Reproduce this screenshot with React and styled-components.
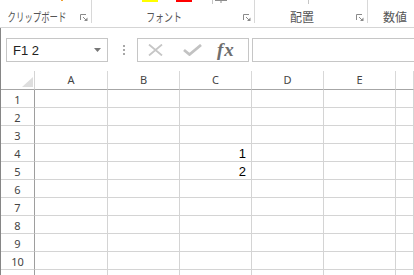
import React from "react";
import styled, { createGlobalStyle } from "styled-components";

const GlobalStyle = createGlobalStyle`
  html, body {
    margin: 0;
    padding: 0;
    background: #fff;
  }
  body {
    font-family: "Noto Sans", "Liberation Sans", sans-serif;
  }
`;

const COLS = ["A", "B", "C", "D", "E", ""];
const ROWS = [1, 2, 3, 4, 5, 6, 7, 8, 9, 10, 11];
const VALUES = { "4-C": "1", "5-C": "2" };

const App = () => {
  return (
    <Window>
      <GlobalStyle />
      <Ribbon>
        <Group $width={92}>
          <TopStrip>
            <Swatch $color="#f0a030" $w={2} $h={1} $ml={61} />
          </TopStrip>
          <LabelRow>
            <LabelBox>
              <Label $squeeze={0.7}>クリップボード</Label>
            </LabelBox>
            <Launcher />
          </LabelRow>
        </Group>
        <Group $width={163}>
          <TopStrip>
            <Swatch $color="#ffff00" $w={16} $h={2} $ml={50} />
            <Swatch $color="#ff0000" $w={16} $h={2} $ml={18} />
            <Swatch $color="#c6c6c6" $w={1} $h={4} $ml={20} />
            <StubIcon />
          </TopStrip>
          <LabelRow>
            <LabelBox>
              <Label $squeeze={0.74}>フォント</Label>
            </LabelBox>
            <Launcher />
          </LabelRow>
        </Group>
        <Group $width={113}>
          <TopStrip>
            <Swatch $color="#c6c6c6" $w={1} $h={4} $ml={53} />
          </TopStrip>
          <LabelRow>
            <LabelBox>
              <Label>配置</Label>
            </LabelBox>
            <Launcher />
          </LabelRow>
        </Group>
        <Group $last>
          <TopStrip />
          <LabelRow>
            <LabelBox $left>
              <Label>数値</Label>
            </LabelBox>
          </LabelRow>
        </Group>
      </Ribbon>

      <Body>
        <FormulaBar>
          <NameBox>
            <span>F1 2</span>
            <DropArrow />
          </NameBox>
          <Grip>
            <svg width="2" height="10" viewBox="0 0 2 10">
              <rect x="0" y="0" width="2" height="2" fill="#a8a8a8" />
              <rect x="0" y="4" width="2" height="2" fill="#a8a8a8" />
              <rect x="0" y="8" width="2" height="2" fill="#a8a8a8" />
            </svg>
          </Grip>
          <FxBox>
            <svg width="15" height="12" viewBox="0 0 15 12">
              <path d="M1 0.5 L14 11.5 M14 0.5 L1 11.5" stroke="#c6c6c6" strokeWidth="1.8" fill="none" />
            </svg>
            <CheckIcon width="19" height="12" viewBox="0 0 19 12">
              <path d="M1 6 L6.5 10.5 L18 1" stroke="#c2c2c2" strokeWidth="2.8" fill="none" />
            </CheckIcon>
            <Fx>fx</Fx>
          </FxBox>
          <FormulaInput />
        </FormulaBar>

        <Sheet>
          <Corner>
            <svg width="11" height="10" viewBox="0 0 11 10">
              <path d="M0 10 L11 10 L11 0 Z" fill="#dedede" />
            </svg>
          </Corner>
          {COLS.map((c, i) => (
            <ColHead key={"h" + i}>{c}</ColHead>
          ))}
          {ROWS.map((r) => (
            <React.Fragment key={r}>
              {/* row 11 is cut off by the window, only its top line shows */}
              <RowHead>{r <= 10 ? r : ""}</RowHead>
              {COLS.map((c, i) => (
                <Cell key={r + "-" + i}>{VALUES[r + "-" + c] || ""}</Cell>
              ))}
            </React.Fragment>
          ))}
        </Sheet>
      </Body>
    </Window>
  );
};

const Launcher = () => (
  <LauncherSvg width="8" height="7" viewBox="0 0 8 7">
    <path d="M0.5 6 V0.5 H6" stroke="#8a8a8a" strokeWidth="1" fill="none" />
    <path d="M3 3 L6.5 6.5" stroke="#8a8a8a" strokeWidth="1" fill="none" />
    <path d="M7.5 3.5 V7 H4 Z" fill="#8a8a8a" />
  </LauncherSvg>
);

const StubIcon = () => (
  <StubSvg width="12" height="3" viewBox="0 0 12 3">
    <path d="M0 0.5 H12" stroke="#8c8c8c" strokeWidth="1" />
    <path d="M6 0 V3" stroke="#8c8c8c" strokeWidth="1" />
  </StubSvg>
);

const DropArrow = () => (
  <ArrowSvg width="7" height="4" viewBox="0 0 7 4">
    <path d="M0 0 H7 L3.5 4 Z" fill="#777" />
  </ArrowSvg>
);

export default App;

const Window = styled.div`
  width: 414px;
  height: 275px;
  overflow: hidden;
  background: #fff;
  display: flex;
  flex-direction: column;
`;

const Ribbon = styled.div`
  display: flex;
  height: 28px;
  flex-shrink: 0;
  box-sizing: border-box;
  border-bottom: 1px solid #d5d5d5;
`;

const Group = styled.div`
  ${(p) => (p.$last ? "flex: 1;" : `width: ${p.$width}px; flex-shrink: 0;`)}
  height: 23px;
  box-sizing: border-box;
  border-right: ${(p) => (p.$last ? "none" : "1px solid #d8d8d8")};
  display: flex;
  flex-direction: column;
  justify-content: space-between;
`;

const TopStrip = styled.div`
  display: flex;
  align-items: flex-start;
  height: 4px;
`;

const Swatch = styled.div`
  width: ${(p) => p.$w}px;
  height: ${(p) => p.$h}px;
  margin-left: ${(p) => p.$ml}px;
  background: ${(p) => p.$color};
  flex-shrink: 0;
`;

const StubSvg = styled.svg`
  margin-left: 2px;
  display: block;
`;

const LabelRow = styled.div`
  display: flex;
  align-items: center;
  height: 12px;
`;

const LabelBox = styled.div`
  flex: 1;
  min-width: 0;
  display: flex;
  justify-content: ${(p) => (p.$left ? "flex-start" : "center")};
  padding-left: ${(p) => (p.$left ? "15px" : "0")};
`;

const Label = styled.span`
  display: inline-block;
  flex-shrink: 0;
  font-family: "Noto Sans CJK JP", sans-serif;
  font-size: 12px;
  line-height: 12px;
  color: #555;
  white-space: nowrap;
  transform: scaleX(${(p) => p.$squeeze || 1});
`;

const LauncherSvg = styled.svg`
  display: block;
  margin: 0 3px 0 7px;
  flex-shrink: 0;
`;

const Body = styled.div`
  flex: 1;
  display: flex;
  flex-direction: column;
  border-left: 1px solid #868686;
  padding-top: 10px;
  min-height: 0;
`;

const FormulaBar = styled.div`
  display: flex;
  align-items: stretch;
  height: 24px;
  margin-left: 5px;
  flex-shrink: 0;
`;

const NameBox = styled.div`
  width: 102px;
  box-sizing: border-box;
  border: 1px solid #c6c6c6;
  display: flex;
  align-items: center;
  padding: 0 6px;
  font-family: "Liberation Sans", sans-serif;
  font-size: 13px;
  color: #222;
`;

const ArrowSvg = styled.svg`
  margin-left: auto;
  display: block;
`;

const Grip = styled.div`
  width: 29px;
  display: flex;
  align-items: center;
  justify-content: center;
  padding-left: 2px;
  box-sizing: border-box;
`;

const FxBox = styled.div`
  width: 112px;
  box-sizing: border-box;
  border: 1px solid #c6c6c6;
  display: flex;
  align-items: center;
  padding-left: 10px;
`;

const CheckIcon = styled.svg`
  margin-left: 20px;
  display: block;
`;

const Fx = styled.span`
  margin-left: 15px;
  font-family: "Liberation Serif", serif;
  font-style: italic;
  font-weight: bold;
  font-size: 19px;
  letter-spacing: 1px;
  color: #6e6e6e;
  line-height: 1;
  margin-top: -2px;
`;

const FormulaInput = styled.div`
  flex: 1;
  margin-left: 3px;
  box-sizing: border-box;
  border: 1px solid #c6c6c6;
  border-right: none;
`;

const Sheet = styled.div`
  margin-top: 9px;
  display: grid;
  grid-template-columns: 34px 73px 72px 72px 72px 72px 1fr;
  grid-template-rows: 19px;
  grid-auto-rows: 18px;
  font-family: "Noto Sans", sans-serif;
`;

const Corner = styled.div`
  box-sizing: border-box;
  border-right: 1px solid #d4d4d4;
  border-bottom: 1px solid #a6a6a6;
  display: flex;
  justify-content: flex-end;
  align-items: flex-end;
  padding: 0 1px 2px 0;
`;

const ColHead = styled.div`
  box-sizing: border-box;
  border-right: 1px solid #d8d8d8;
  border-bottom: 1px solid #a6a6a6;
  font-size: 11px;
  line-height: 18px;
  text-align: center;
  color: #444;
`;

const RowHead = styled.div`
  box-sizing: border-box;
  border-right: 1px solid #9e9e9e;
  border-bottom: 1px solid #d4d4d4;
  font-size: 11px;
  line-height: 17px;
  padding-top: 1px;
  text-align: center;
  color: #444;
  overflow: hidden;
`;

const Cell = styled.div`
  box-sizing: border-box;
  border-right: 1px solid #d4d4d4;
  border-bottom: 1px solid #d4d4d4;
  display: flex;
  justify-content: flex-end;
  align-items: flex-end;
  padding: 0 5px 1px 0;
  font-family: "Liberation Sans", sans-serif;
  font-size: 13px;
  line-height: 13px;
  color: #000;
`;
